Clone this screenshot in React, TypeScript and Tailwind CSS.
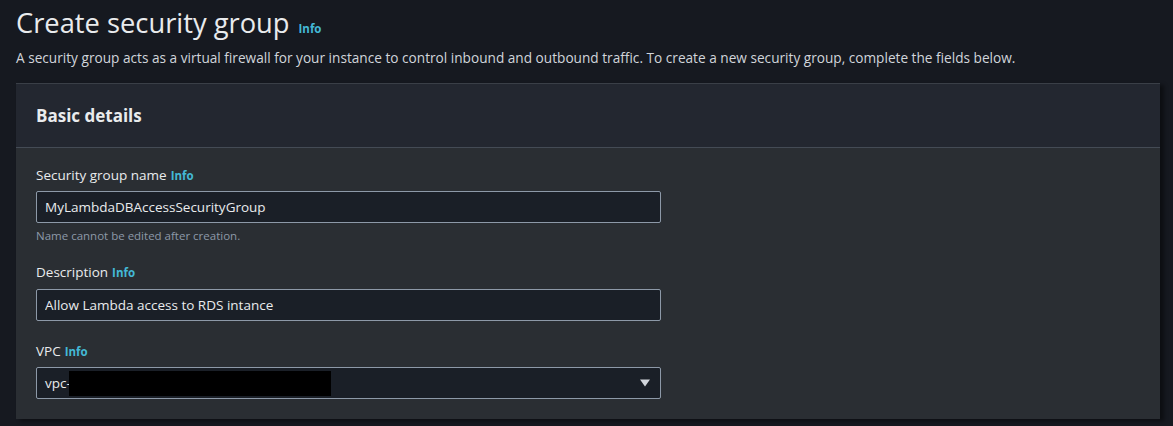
import { useState } from "react";

function Info() {
  return <span className="text-[11.5px] font-bold text-[#44b9d6] ml-1">Info</span>;
}

export default function App() {
  const [name, setName] = useState("MyLambdaDBAccessSecurityGroup");
  const [desc, setDesc] = useState("Allow Lambda access to RDS intance");

  return (
    <div className="w-[1173px] h-[426px] bg-[#161920] text-[#e9ebed] overflow-hidden font-['Open_Sans',sans-serif]">
      <div className="pl-4 pt-[3px]">
        <h1 className="text-[27.3px] leading-[40px] text-[#e9ebed] flex items-baseline">
          Create security group
          <span className="text-[11.5px] font-bold text-[#44b9d6] ml-[9px]">Info</span>
        </h1>
        <p className="text-[13.65px] leading-[20px] text-[#d1d5db] mt-[-1px]">
          A security group acts as a virtual firewall for your instance to control inbound and outbound traffic. To
          create a new security group, complete the fields below.
        </p>
      </div>

      <div className="ml-4 mt-[15px] w-[1144px] bg-[#2a2e33] border-t border-[#3a3f47] shadow-[4px_2px_4px_rgba(0,0,0,0.45)]">
        <div className="h-[64px] bg-[#232730] border-b border-[#444b55] flex items-center px-5">
          <h2 className="text-[17px] font-bold text-[#e9ebed]">Basic details</h2>
        </div>

        <div className="px-5 pt-[17px] pb-[20px] flex flex-col">
          <label className="text-[13.5px] leading-[20px] flex items-baseline">
            Security group name<Info />
          </label>
          <input
            value={name}
            onChange={(e) => setName(e.target.value)}
            className="mt-[5px] w-[625px] h-[32px] bg-[#1a1f27] border border-[#8d99a8] rounded-[2px] px-2 text-[13.5px] text-[#e9ebed] outline-none"
          />
          <span className="text-[11.5px] text-[#8d99a8] mt-[4px] leading-[18px]">Name cannot be edited after creation.</span>

          <label className="text-[13.5px] leading-[20px] flex items-baseline mt-[17px]">
            Description<Info />
          </label>
          <input
            value={desc}
            onChange={(e) => setDesc(e.target.value)}
            className="mt-[6px] w-[625px] h-[32px] bg-[#1a1f27] border border-[#8d99a8] rounded-[2px] px-2 text-[13.5px] text-[#e9ebed] outline-none"
          />

          <label className="text-[13.5px] leading-[20px] flex items-baseline mt-[20px]">
            VPC<Info />
          </label>
          <div className="mt-[5px] w-[625px] h-[32px] bg-[#1a1f27] border border-[#8d99a8] rounded-[2px] pl-2 pr-[10px] flex items-center justify-between">
            <div className="flex items-center text-[13.5px]">
              <span>vpc-</span>
              <span className="block w-[262px] h-[25px] bg-black ml-[-2px]" />
            </div>
            <svg width="10" height="8" viewBox="0 0 10 8">
              <path d="M0 0.5 L10 0.5 L5 7.5 Z" fill="#d1d5db" />
            </svg>
          </div>
        </div>
      </div>
    </div>
  );
}
